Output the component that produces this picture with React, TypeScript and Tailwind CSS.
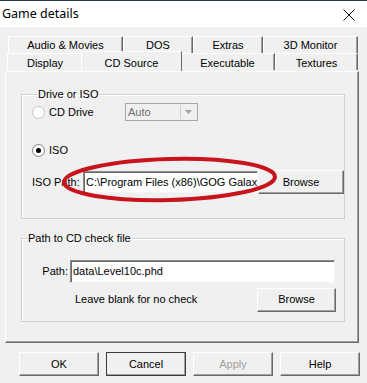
const raised =
  "border border-t-white border-l-white border-r-[#696969] border-b-[#696969] shadow-[inset_-1px_-1px_0_#a0a0a0]";
const sunken =
  "border border-t-[#8a8a8a] border-l-[#8a8a8a] border-r-[#f4f4f4] border-b-[#f4f4f4] shadow-[inset_1px_1px_0_#6b6b6b]";

type Tab = { label: string; w: number };

const topRow: Tab[] = [
  { label: "Audio & Movies", w: 115 },
  { label: "DOS", w: 70 },
  { label: "Extras", w: 70 },
  { label: "3D Monitor", w: 95 },
];

const bottomRow: Tab[] = [
  { label: "Display", w: 76 },
  { label: "CD Source", w: 97 },
  { label: "Executable", w: 95 },
  { label: "Textures", w: 83 },
];

function TabItem({ tab, active, low }: { tab: Tab; active?: boolean; low?: boolean }) {
  if (active) {
    return (
      <div
        className="relative z-10 -mx-[2px] -mt-[2px] flex h-[20px] items-start justify-center border-l border-r border-t border-l-white border-t-white border-r-[#696969] bg-[#f0f0f0] pt-[3px]"
        style={{ width: tab.w + 4 }}
      >
        {tab.label}
      </div>
    );
  }
  return (
    <div
      className={`flex h-[17px] items-center justify-center border-l border-r border-t border-l-white border-t-white border-r-[#696969] shadow-[inset_-1px_0_0_#a0a0a0] ${
        low ? "pt-[2px]" : ""
      }`}
      style={{ width: tab.w }}
    >
      {tab.label}
    </div>
  );
}

function Radio({ checked }: { checked?: boolean }) {
  return (
    <span
      className={`flex size-[13px] items-center justify-center rounded-full border bg-white ${
        checked ? "border-[#7f7f7f]" : "border-[#c2c2c2]"
      }`}
    >
      {checked ? <span className="size-[5px] rounded-full bg-black" /> : null}
    </span>
  );
}

function Button({
  children,
  disabled,
  isDefault,
  className = "",
}: {
  children: React.ReactNode;
  disabled?: boolean;
  isDefault?: boolean;
  className?: string;
}) {
  return (
    <div
      className={`flex items-center justify-center bg-[#f0f0f0] ${
        isDefault ? "outline outline-1 outline-[#3c3c3c] -outline-offset-1" : ""
      } ${raised} ${disabled ? "text-[#a0a0a0]" : ""} ${className}`}
    >
      {children}
    </div>
  );
}

export default function App() {
  return (
    <div className="relative flex h-[383px] w-[367px] flex-col overflow-hidden bg-[#f0f0f0] font-['Liberation_Sans',Arial,sans-serif] text-[11px] text-black">
      <div className="h-px bg-[#2c3a4d]" />
      <div className="flex h-[26px] items-center justify-between bg-white pl-[2px] pr-[12px]">
        <span className="font-['Noto_Sans',sans-serif] text-[12.5px]">Game details</span>
        <svg width="12" height="12" viewBox="0 0 12 12" className="mt-[2px]">
          <path d="M0.5 0.5 L11.5 11.5 M11.5 0.5 L0.5 11.5" stroke="#111" strokeWidth="1" />
        </svg>
      </div>

      <div className="flex flex-col pl-[5px] pt-[9px]">
        <div className="ml-[3px] flex">
          {topRow.map((t) => (
            <TabItem key={t.label} tab={t} />
          ))}
        </div>
        <div className="ml-[2px] flex items-start">
          {bottomRow.map((t) => (
            <TabItem key={t.label} tab={t} low active={t.label === "CD Source"} />
          ))}
        </div>

        <div className={`flex h-[272px] w-[354px] flex-col pl-[15px] pt-[15.5px] ${raised}`}>
          <fieldset className="w-[322px] border border-[#d0d0d0] pb-[24px] pl-[10px] shadow-[inset_1px_1px_0_white]">
            <legend className="ml-[5px] px-[1px] leading-[13px]">Drive or ISO</legend>
            <div className="mt-[2.5px] flex h-[18px] items-center">
              <div className="flex w-[93px] items-center gap-[4px]">
                <Radio />
                <span>CD Drive</span>
              </div>
              <div className="flex h-[18px] w-[73px] items-center border border-[#a7a7a7] bg-[#f0f0f0] pl-[2px] text-[#6d6d6d]">
                <span className="flex-1">Auto</span>
                <div className="mr-[1px] flex h-[14px] w-[16px] items-center justify-center border-l border-[#cfcfcf]">
                  <svg width="7" height="4" viewBox="0 0 7 4">
                    <path d="M0 0 H7 L3.5 4 Z" fill="#a0a0a0" />
                  </svg>
                </div>
              </div>
            </div>
            <div className="mt-[21px] flex h-[16px] items-center gap-[4px]">
              <Radio checked />
              <span>ISO</span>
            </div>
            <div className="mt-[12px] flex h-[24px] items-center">
              <span className="w-[51px]">ISO Path:</span>
              <div className={`flex h-[22px] w-[175px] items-center overflow-hidden whitespace-nowrap bg-white pl-[2px] ${sunken}`}>
                C:\Program Files (x86)\GOG Galax
              </div>
              <Button className="h-[24px] w-[86px]">Browse</Button>
            </div>
          </fieldset>

          <fieldset className="mt-[13px] w-[324px] border border-[#d0d0d0] pb-[9px] shadow-[inset_1px_1px_0_white]">
            <legend className="ml-[5px] px-[1px] leading-[13px]">Path to CD check file</legend>
            <div className="mt-[14.5px] flex h-[23px] items-center">
              <span className="w-[48px] pr-[2px] text-right">Path:</span>
              <div className={`flex h-[23px] w-[265px] items-center overflow-hidden whitespace-nowrap bg-white pl-[2px] ${sunken}`}>
                data\Level10c.phd
              </div>
            </div>
            <div className="mt-[5px] flex h-[24px] items-center">
              <span className="ml-[53px] w-[182px]">Leave blank for no check</span>
              <Button className="h-[24px] w-[79px]">Browse</Button>
            </div>
          </fieldset>
        </div>
      </div>

      <div className="mt-[9px] flex gap-[7px] pl-[19px]">
        <Button className="h-[24px] w-[80px]">OK</Button>
        <Button isDefault className="h-[24px] w-[80px]">Cancel</Button>
        <Button disabled className="h-[24px] w-[80px]">Apply</Button>
        <Button className="h-[24px] w-[80px]">Help</Button>
      </div>

      <svg
        className="pointer-events-none absolute left-0 top-0"
        width="367"
        height="383"
        viewBox="0 0 367 383"
      >
        <ellipse
          cx="169.5"
          cy="179.5"
          rx="105.5"
          ry="20.5"
          fill="none"
          stroke="#c8141c"
          strokeWidth="4"
          transform="rotate(-1.5 169.5 179.5)"
        />
      </svg>
    </div>
  );
}
